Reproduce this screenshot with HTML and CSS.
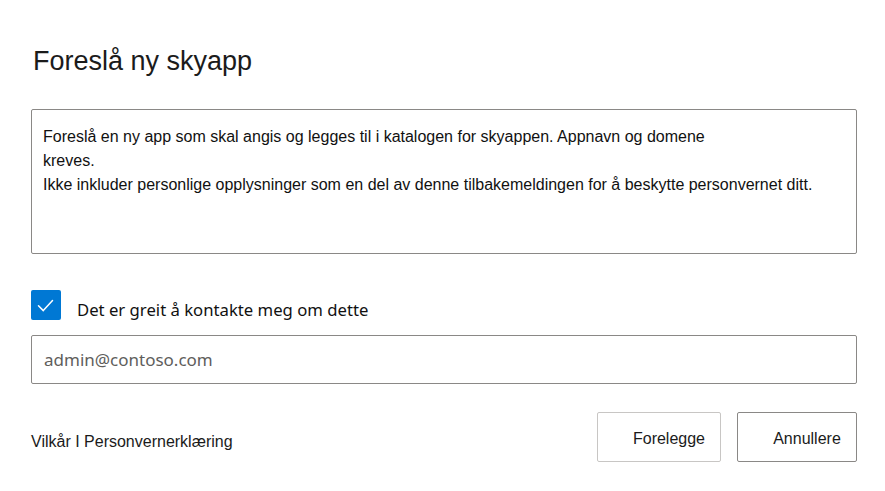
FILE: index.html
```html
<!DOCTYPE html>
<html lang="no">
<head>
<meta charset="utf-8">
<title>Foreslå ny skyapp</title>
<link rel="stylesheet" href="styles.css">
</head>
<body>
<div class="dialog">
  <h1 class="title">Foreslå ny skyapp</h1>
  <div class="notice">
    <p>Foreslå en ny app som skal angis og legges til i katalogen for skyappen. Appnavn og domene<br>kreves.</p>
    <p>Ikke inkluder personlige opplysninger som en del av denne tilbakemeldingen for å beskytte personvernet ditt.</p>
  </div>
  <label class="check-row">
    <span class="checkbox">
      <svg width="30" height="30" viewBox="0 0 30 30"><path d="M7.5 15.8 L12.3 20.6 L21.5 10.6" fill="none" stroke="#fff" stroke-width="1.5" stroke-linecap="round" stroke-linejoin="round"/></svg>
    </span>
    <span class="check-label">Det er greit å kontakte meg om dette</span>
  </label>
  <div class="email">admin@contoso.com</div>
  <div class="footer">
    <div class="links">Vilkår I Personvernerklæring</div>
    <div class="buttons">
      <button class="btn btn-submit">Forelegge</button>
      <button class="btn btn-cancel">Annullere</button>
    </div>
  </div>
</div>
</body>
</html>
```

FILE: styles.css
```css
html, body {
  margin: 0;
  padding: 0;
  background: #ffffff;
}
body {
  font-family: "Liberation Sans", Arial, sans-serif;
  color: #1b1b1b;
}
.dialog {
  width: 826px;
  margin-left: 31px;
  padding-top: 45px;
}
.title {
  margin: 0 0 0 2px;
  font-size: 27px;
  line-height: 32px;
  font-weight: 400;
  color: #1b1b1b;
}
.notice {
  margin-top: 32px;
  box-sizing: border-box;
  height: 145px;
  border: 1px solid #8a8886;
  border-radius: 2px;
  padding: 15px 12px 0 11px;
  font-size: 16px;
  line-height: 24px;
  color: #111;
}
.notice p {
  margin: 0;
}
.check-row {
  margin-top: 36px;
  display: flex;
  align-items: flex-start;
  gap: 16px;
  height: 30px;
}
.checkbox {
  width: 30px;
  height: 30px;
  background: #0078d4;
  border-radius: 2px;
  display: block;
  flex: none;
}
.checkbox svg {
  display: block;
}
.check-label {
  padding-top: 9px;
  font-family: "Segoe UI", "Noto Sans", sans-serif;
  font-size: 16.7px;
  line-height: 21px;
  color: #111;
}
.email {
  margin-top: 15px;
  box-sizing: border-box;
  height: 49px;
  border: 1px solid #8a8886;
  border-radius: 2px;
  padding-left: 12px;
  display: flex;
  align-items: center;
  font-family: "Segoe UI", "Noto Sans", sans-serif;
  font-size: 17px;
  color: #605e5c;
}
.footer {
  margin-top: 28px;
  display: flex;
  justify-content: space-between;
  align-items: center;
}
.links {
  font-size: 16px;
  color: #1b1b1b;
  padding-top: 9px;
}
.buttons {
  display: flex;
  gap: 16px;
}
.btn {
  box-sizing: border-box;
  height: 50px;
  background: #fff;
  border-radius: 2px;
  font-family: "Liberation Sans", Arial, sans-serif;
  font-size: 16px;
  color: #1b1b1b;
  padding: 3px 14px 0 34px;
  cursor: pointer;
}
.btn-submit {
  width: 124px;
  border: 1px solid #c8c6c4;
}
.btn-cancel {
  width: 120px;
  border: 1px solid #8a8886;
}
```
